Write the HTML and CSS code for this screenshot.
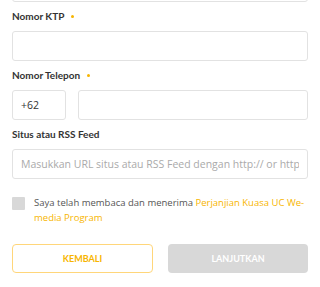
FILE: index.html
```html
<!DOCTYPE html>
<html lang="id">
<head>
    <meta charset="UTF-8">
    <title>Formulir Pendaftaran</title>
    <link rel="stylesheet" href="styles.css">
</head>
<body>
<form class="form">
    <div class="field field-cut">
        <input class="input" type="text">
    </div>

    <div class="field">
        <label class="label" for="ktp">Nomor KTP <span class="req"></span></label>
        <input id="ktp" class="input" type="text">
    </div>

    <div class="field">
        <label class="label" for="phone">Nomor Telepon <span class="req"></span></label>
        <div class="phone-row">
            <input class="input code" type="text" value="+62">
            <input id="phone" class="input" type="text">
        </div>
    </div>

    <div class="field">
        <label class="label" for="site">Situs atau RSS Feed</label>
        <input id="site" class="input" type="text" placeholder="Masukkan URL situs atau RSS Feed dengan http:// or https://">
    </div>

    <div class="agree">
        <span class="check"></span>
        <p class="agree-text">Saya telah membaca dan menerima <a href="#">Perjanjian Kuasa UC We-media Program</a></p>
    </div>

    <div class="actions">
        <button type="button" class="btn btn-back">KEMBALI</button>
        <button type="button" class="btn btn-next" disabled>LANJUTKAN</button>
    </div>
</form>
</body>
</html>
```

FILE: styles.css
```css
body {
    margin: 0;
    background: #fff;
    font-family: "Open Sans", Arial, sans-serif;
    color: #333;
}

.form {
    padding: 0 12px;
}

.field-cut {
    margin-top: -28px;
}

.field {
    margin-bottom: 8px;
}

.label {
    display: block;
    height: 21px;
    font-family: Lato, Arial, sans-serif;
    font-weight: bold;
    font-size: 10px;
    line-height: 12px;
    color: #333;
}

.req {
    display: inline-block;
    width: 3px;
    height: 3px;
    margin-left: 4px;
    border-radius: 50%;
    background: #f7b500;
    vertical-align: 2px;
}

.input {
    display: block;
    box-sizing: border-box;
    width: 100%;
    height: 30px;
    margin: 0;
    padding: 0 8px;
    border: 1px solid #e2e2e2;
    border-radius: 3px;
    font-family: "Open Sans", Arial, sans-serif;
    font-size: 10.5px;
    color: #333;
    outline: none;
}

.input::placeholder {
    color: #aaa;
}

.phone-row {
    display: flex;
    gap: 12px;
}

.phone-row .code {
    flex: 0 0 54px;
    width: 54px;
    padding-left: 8px;
}

.agree {
    display: flex;
    align-items: flex-start;
    gap: 9px;
    margin-top: 17px;
}

.check {
    flex: 0 0 13px;
    height: 13px;
    margin-top: 1px;
    background: #d8d8d8;
    border-radius: 1px;
}

.agree-text {
    margin: 0;
    font-size: 9.5px;
    line-height: 14.5px;
    color: #555;
}

.agree-text a {
    color: #f7b500;
    text-decoration: none;
}

.actions {
    display: flex;
    justify-content: space-between;
    margin-top: 19px;
}

.btn {
    box-sizing: border-box;
    width: 141px;
    height: 29px;
    border-radius: 4px;
    font-family: Lato, Arial, sans-serif;
    font-weight: bold;
    font-size: 9px;
}

.btn-back {
    border: 1px solid #ffd67a;
    background: #fff;
    color: #f7b500;
}

.btn-next {
    width: 140px;
    border: none;
    background: #d8d8d8;
    color: #fff;
}
```
